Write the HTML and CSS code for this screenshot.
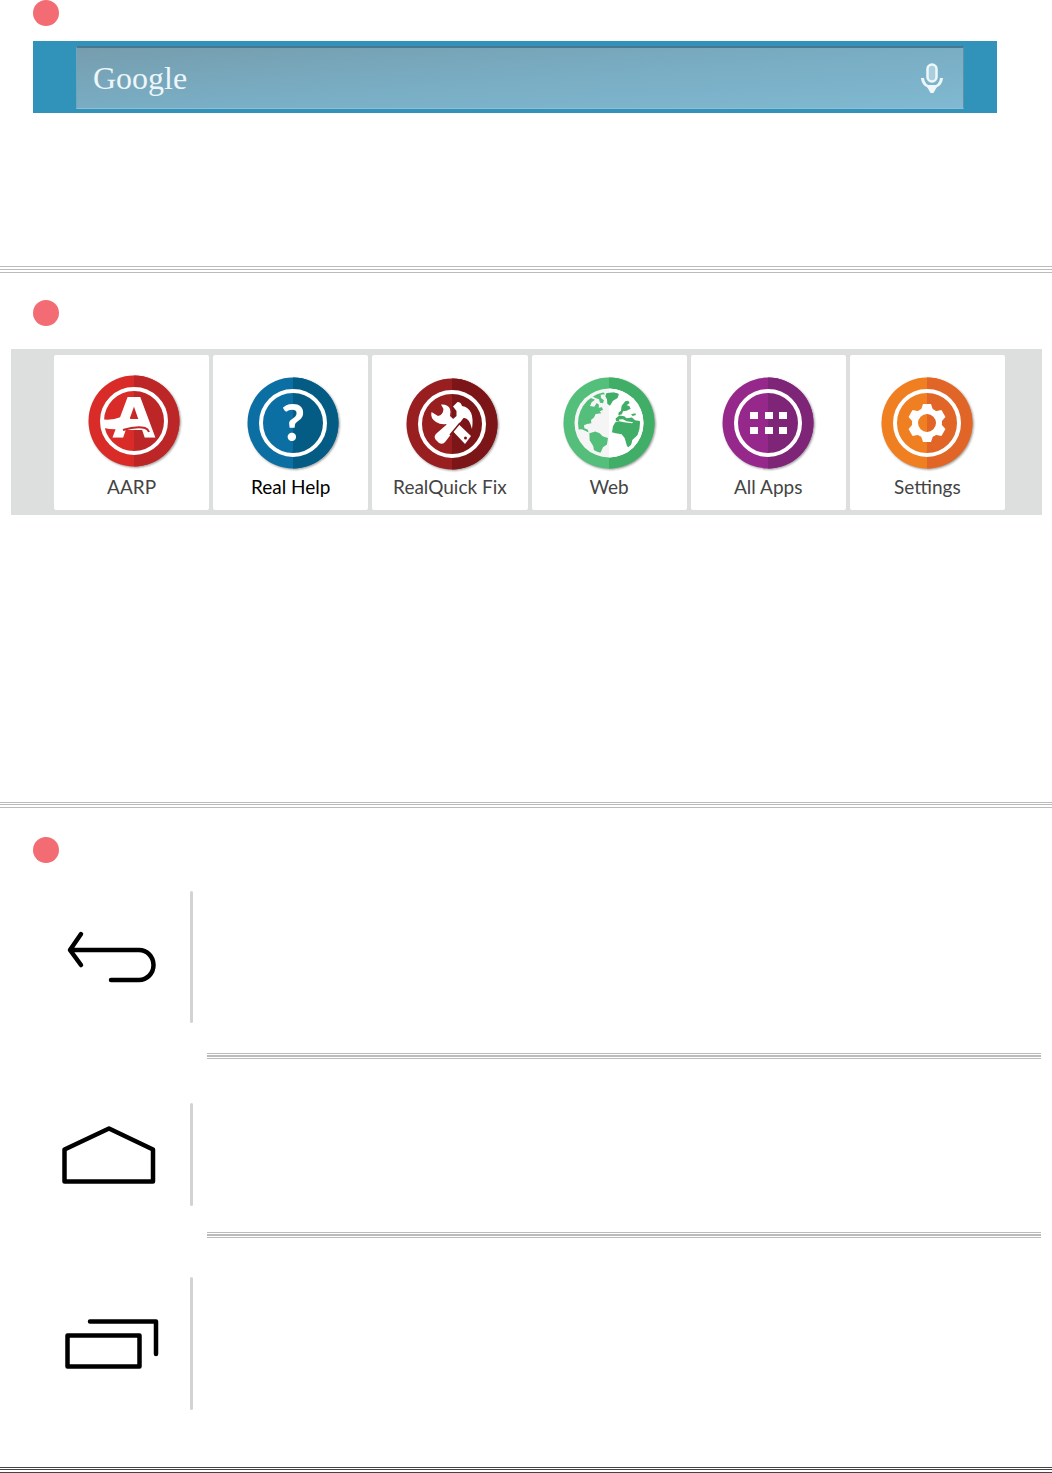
FILE: index.html
```html
<!DOCTYPE html>
<html lang="en">
<head>
  <meta charset="UTF-8">
  <meta name="viewport" content="width=device-width, initial-scale=1">
  <title>Home Screen Guide</title>
  <link rel="stylesheet" href="styles.css">
</head>
<body>

  <section class="part part-search">
    <span class="dot"></span>
    <div class="search-strip">
      <form class="search-box">
        <label class="search-logo" for="search">Google</label>
        <input class="search-input" type="text" id="search">
        <button class="mic" type="button" aria-label="Voice search">
          <svg width="22" height="32" viewBox="0 0 22 32">
            <rect x="6.5" y="2.5" width="9" height="17" rx="4.5" fill="#a9cfdf" stroke="#eef7fa" stroke-width="2.5"/>
            <path d="M1.5 16 C2 22 6 25 11 25 C16 25 20 22 20.5 16" fill="none" stroke="#eef7fa" stroke-width="3"/>
            <path d="M5 23 H17 L12.5 31 H9.5 Z" fill="#eef7fa"/>
          </svg>
        </button>
      </form>
    </div>
  </section>

  <hr class="rule rule-even">

  <section class="part part-apps">
    <span class="dot"></span>
    <nav class="launcher">
      <button class="tile" type="button">
        <svg class="app-icon" viewBox="0 0 100 100">
          <circle cx="52" cy="48" r="45.5" fill="#d92b27"/>
          <path d="M52 2.5 A45.5 45.5 0 0 1 52 93.5 Z" fill="#bd2627"/>
          <circle class="ring" cx="52" cy="48" r="32"/>
          <text class="letter-a" x="52" y="64" text-anchor="middle">A</text>
          <path d="M19 46 Q29 48 39 44 L64 47 L70 58 Q62 53 50 54 Q34 58 22 55 Z" fill="#fff"/>
          <path d="M51.5 37 L55 46 H48 Z" fill="#cb2827"/>
          <path d="M41 57 Q54 53 63 55 Q66 56 67 59" fill="none" stroke="#c42727" stroke-width="2"/>
        </svg>
        <span class="tile-name">AARP</span>
      </button>

      <button class="tile tile-active" type="button">
        <svg class="app-icon" viewBox="0 0 100 100">
          <circle cx="52" cy="50" r="45.5" fill="#0c6fa4"/>
          <path d="M52 4.5 A45.5 45.5 0 0 1 52 95.5 Z" fill="#045b84"/>
          <circle class="ring" cx="52" cy="50" r="32"/>
          <text class="question" x="52" y="68" text-anchor="middle">?</text>
        </svg>
        <span class="tile-name">Real Help</span>
      </button>

      <button class="tile" type="button">
        <svg class="app-icon" viewBox="0 0 100 100">
          <circle cx="52" cy="51" r="45.5" fill="#981e20"/>
          <path d="M52 5.5 A45.5 45.5 0 0 1 52 96.5 Z" fill="#7c1517"/>
          <circle class="ring" cx="52" cy="51" r="32"/>
          <!-- wrench -->
          <path d="M41 31.5 Q48 31 50 36 Q51 39 50 43 L71 63 L65 71 L46 51 Q41 52 36 49 Q30 45 31.5 39 L38 43 Q43 42 43.5 36 Z" fill="#fff"/>
          <!-- hammer -->
          <path d="M53 33.5 L57.5 29 Q61 29 62 33 Q75 35 72 56 Q69 44 63.5 45 L45.5 68.5 Q43 72 39 70 L35.5 66.5 Q33 63 37.5 59.5 L56.5 43 V38 Z" fill="#fff"/>
          <path d="M60 50 L50 62" stroke="#7c1517" stroke-width="1.5"/>
          <circle cx="65.5" cy="65" r="1.5" fill="#7c1517"/>
        </svg>
        <span class="tile-name">RealQuick Fix</span>
      </button>

      <button class="tile" type="button">
        <svg class="app-icon" viewBox="2 0 100 100">
          <clipPath id="globe"><circle cx="52" cy="50" r="31"/></clipPath>
          <circle cx="52" cy="50" r="45.5" fill="#54be7b"/>
          <path d="M52 4.5 A45.5 45.5 0 0 1 52 95.5 Z" fill="#40ae67"/>
          <circle cx="52" cy="50" r="34.5" fill="#f5f5f5"/>
          <path d="M52 15.5 A34.5 34.5 0 0 1 52 84.5 Z" fill="#fff"/>
          <g clip-path="url(#globe)">
            <g transform="translate(-1.3 -3) scale(.333)">
              <!-- Americas -->
              <path d="M55 180 L60 120 L85 92 L106 84 L118 89 L108 97 L103 108 L116 110 L123 99 L130 104 L129 113 L139 112 L142 120 L132 124 L137 130 L120 132 L115 143 L106 150 L107 160 L94 162 L85 166 L86 175 L96 179 L99 188 L87 182 L78 178 Z" fill="#54be7b"/>
              <path d="M109 78 L125 70 L143 66 L148 73 L135 74 L136 84 L145 91 L142 100 L133 98 L130 88 L119 84 Z" fill="#54be7b"/>
              <path d="M101 190 L119 185 L132 190 L141 199 L157 204 L154 224 L142 232 L135 248 L128 254 L116 251 L113 229 L102 211 Z" fill="#54be7b"/>
              <path d="M152 70 L175 66 L190 71 L186 84 L172 92 L163 107 L155 101 L154 88 L149 79 Z" fill="#40ae67"/>
              <!-- Europe and Africa -->
              <path d="M198 107 L209 94 L218 92 L222 99 L213 106 L221 108 L225 116 L213 122 L202 124 L199 133 L188 136 L189 128 L196 122 Z" fill="#40ae67"/>
              <path d="M180 146 L191 137 L206 139 L213 145 L229 143 L238 151 L258 154 L258 185 L230 210 L224 239 L214 228 L207 204 L198 193 L180 190 L169 187 L172 169 L179 157 L193 153 L181 154 Z" fill="#40ae67"/>
              <path d="M190 149 L202 148 L213 154 L233 157 L229 160 L205 157 L191 154 Z" fill="#fff"/>
              <path d="M226 133 L239 130 L241 135 L231 138 Z" fill="#40ae67"/>
            </g>
          </g>
        </svg>
        <span class="tile-name">Web</span>
      </button>

      <button class="tile" type="button">
        <svg class="app-icon" viewBox="2 0 100 100">
          <circle cx="52" cy="50" r="45.5" fill="#97288b"/>
          <path d="M52 4.5 A45.5 45.5 0 0 1 52 95.5 Z" fill="#7e2577"/>
          <circle class="ring" cx="52" cy="50" r="32"/>
          <path d="M34 39h8v7h-8z M49 39h8v7h-8z M63 39h8v7h-8z M34 54h8v7h-8z M49 54h8v7h-8z M63 54h8v7h-8z" fill="#fff"/>
        </svg>
        <span class="tile-name">All Apps</span>
      </button>

      <button class="tile" type="button">
        <svg class="app-icon" viewBox="2 0 100 100">
          <circle cx="52" cy="50" r="45.5" fill="#f07f22"/>
          <path d="M52 4.5 A45.5 45.5 0 0 1 52 95.5 Z" fill="#e06527"/>
          <circle class="ring" cx="52" cy="50" r="32"/>
          <circle cx="52" cy="50" r="12" fill="none" stroke="#fff" stroke-width="6"/>
          <g fill="#fff">
            <path id="tooth" d="M46 37 L48 31 H56 L58 37 Z"/>
            <use href="#tooth" transform="rotate(60 52 50)"/>
            <use href="#tooth" transform="rotate(120 52 50)"/>
            <use href="#tooth" transform="rotate(180 52 50)"/>
            <use href="#tooth" transform="rotate(240 52 50)"/>
            <use href="#tooth" transform="rotate(300 52 50)"/>
          </g>
        </svg>
        <span class="tile-name">Settings</span>
      </button>
    </nav>
  </section>

  <hr class="rule">

  <section class="part part-keys">
    <span class="dot"></span>

    <div class="key-row">
      <svg class="key-icon" viewBox="0 0 100 60" role="img" aria-label="Back">
        <path d="M21 7 L10 23 L21 38 M10 23 H79 A14.5 15 0 0 1 79 53 H51"/>
      </svg>
      <div class="key-text"></div>
    </div>
    <hr class="rule rule-thick">

    <div class="key-row key-row-short">
      <svg class="key-icon" viewBox="0 0 100 60" role="img" aria-label="Home">
        <path d="M4.5 24.5 L49 3.5 L93 24.5 V56.5 H4.5 Z"/>
      </svg>
      <div class="key-text"></div>
    </div>
    <hr class="rule rule-thick">

    <div class="key-row">
      <svg class="key-icon" viewBox="0 0 100 60" role="img" aria-label="Recent apps">
        <path d="M7.5 21.5 H79.5 V52.5 H7.5 Z M30 7.5 H96 V40"/>
      </svg>
      <div class="key-text"></div>
    </div>
  </section>

  <hr class="rule rule-dark">

</body>
</html>
```

FILE: styles.css
```css
* {
  box-sizing: border-box;
}

body {
  margin: 0;
  background: #fff;
  font-family: Lato, "Liberation Sans", sans-serif;
}

.dot {
  display: block;
  width: 26px;
  height: 26px;
  margin-left: 33px;
  border-radius: 50%;
  background: #f36c73;
}

/* triple rules */
.rule {
  height: 6px;
  margin: 0;
  border: 0;
  color: #bbb;
  background: linear-gradient(currentColor 1px, transparent 1px 2px, currentColor 2px 3px, transparent 3px 5px, currentColor 5px);
}

.rule-even {
  height: 7px;
  background: repeating-linear-gradient(currentColor 0 1px, transparent 1px 3px);
}

.rule-thick {
  margin: 0 11px 0 207px;
  background: linear-gradient(currentColor 1px, transparent 1px 2px, currentColor 2px 4px, transparent 4px 5px, currentColor 5px);
}

.rule-dark {
  color: #444;
}

/* search bar */
.part-search {
  padding-bottom: 153px;
}

.search-strip {
  margin: 15px 55px 0 33px;
  padding: 5px 33px 4px 43px;
  background: #3193ba;
}

.search-box {
  display: flex;
  align-items: center;
  height: 63px;
  padding: 0 20px 0 16px;
  border: 1px solid #6ca6bd;
  border-top: 2px solid #477890;
  border-right-color: #5c93ab;
  border-bottom-color: #90bfd2;
  background: linear-gradient(176deg, #769dae, #79adc3 50%, #80b9d2);
}

.search-logo {
  color: #edf6fa;
  font-family: "Liberation Serif", serif;
  font-size: 32px;
  line-height: 36px;
}

.search-input {
  flex: 1;
  min-width: 0;
  border: 0;
  outline: 0;
  background: transparent;
  color: #fff;
  font-size: 20px;
}

.mic {
  display: flex;
  padding: 0;
  border: 0;
  background: none;
}

/* app launcher */
.part-apps {
  padding: 27px 0 287px;
}

.launcher {
  display: grid;
  grid-template-columns: repeat(6, 1fr);
  gap: 4px;
  margin: 23px 10px 0 11px;
  padding: 6px 37px 5px 43px;
  background: #dddfde;
}

.tile {
  display: flex;
  flex-direction: column;
  align-items: center;
  min-width: 0;
  padding: 18px 0 10px;
  border: 0;
  border-radius: 2px;
  background: #fff;
  color: #444;
  font-family: inherit;
}

.tile-active {
  color: #000;
}

.app-icon {
  width: 100px;
  height: 100px;
  filter: drop-shadow(1px 1px 1px rgba(0, 0, 0, 0.4));
}

.ring {
  fill: none;
  stroke: #fff;
  stroke-width: 4px;
}

.letter-a {
  fill: #fff;
  font: bold 56px "DejaVu Sans", sans-serif;
}

.question {
  fill: #fff;
  font: 900 51px Lato, sans-serif;
}

.tile-name {
  font-size: 19px;
  line-height: 27px;
  white-space: nowrap;
}

/* navigation keys */
.part-keys {
  padding: 29px 0 57px;
}

.key-row {
  display: flex;
  align-items: center;
  gap: 30px;
  min-height: 133px;
  margin: 39px 11px 30px 60px;
}

.dot + .key-row {
  margin-top: 28px;
  min-height: 132px;
}

.key-row:last-child {
  margin-bottom: 0;
}

.key-row-short {
  min-height: 103px;
  margin-top: 44px;
  margin-bottom: 26px;
}

.key-icon {
  width: 100px;
  height: 60px;
  fill: none;
  stroke: #000;
  stroke-width: 4.5;
  stroke-linecap: round;
  stroke-linejoin: round;
}

.key-text {
  position: relative;
  flex: 1;
  align-self: stretch;
}

.key-text::before {
  content: "";
  display: block;
  position: absolute;
  inset: 0 auto 0 0;
  width: 3px;
  border-radius: 2px;
  background: #d1d3d4;
}
```
